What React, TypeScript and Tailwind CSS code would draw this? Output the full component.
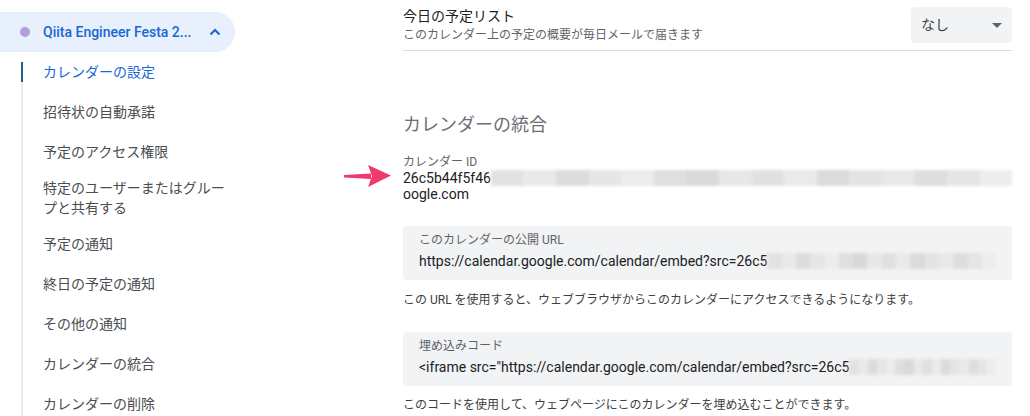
import React from "react";

const FONT = "font-['Roboto','Noto_Sans_CJK_JP',sans-serif]";

const MENU = [
  "カレンダーの設定",
  "招待状の自動承諾",
  "予定のアクセス権限",
  "特定のユーザーまたはグループと共有する",
  "予定の通知",
  "終日の予定の通知",
  "その他の通知",
  "カレンダーの統合",
  "カレンダーの削除",
];

// pixelated grey strip standing in for the blurred-out part of the id
const BLUR = [
  "#e2e2e2", "#e9e9e9", "#dcdcdc", "#e6e6e6", "#ececec", "#dfdfdf", "#d9d9d9", "#e8e8e8",
  "#e0e0e0", "#eaeaea", "#dbdbdb", "#e4e4e4", "#e9e9e9", "#dedede", "#e5e5e5", "#ededed",
];

const Blur = ({ className }: { className?: string }) => (
  <div className={`flex h-[16px] flex-1 overflow-hidden blur-[1.5px] ${className ?? ""}`}>
    {BLUR.map((c, i) => (
      <div key={i} className="h-full flex-1" style={{ backgroundColor: c }} />
    ))}
  </div>
);

const Sidebar = () => (
  <div className="w-[236px] shrink-0 pt-[12px]">
    <div className="flex h-[40px] w-[235px] items-center rounded-r-full bg-[#e8f0fe] pl-[20px] pr-[12px]">
      <span className="h-[10px] w-[10px] rounded-full bg-[#b39ddb]" />
      <span className="ml-[13px] flex-1 text-[14px] font-medium text-[#1967d2]">
        Qiita Engineer Festa 2...
      </span>
      <svg width="12" height="8" viewBox="0 0 12 8" className="mr-[2px]">
        <path d="M1.5 6.5 L6 2 L10.5 6.5" fill="none" stroke="#1967d2" strokeWidth="2" />
      </svg>
    </div>
    <div className="flex flex-col">
      {MENU.map((m, i) => (
        <div key={m} className="flex min-h-[40px]">
          <div className="ml-[21px] flex w-[2px] flex-col">
            {i === 0 ? (
              <>
                <div className="h-[10px]" />
                <div className="h-[20px] bg-[#1a5f96]" />
                <div className="flex-1 bg-[#e8eaed]" />
              </>
            ) : (
              <div className="flex-1 bg-[#e8eaed]" />
            )}
          </div>
          <div
            className={`ml-[20px] flex w-[186px] items-center py-[6px] text-[14px] leading-[20px] ${
              i === 0 ? "text-[#1967d2]" : "text-[#4a4d51]"
            }`}
          >
            {m}
          </div>
        </div>
      ))}
    </div>
  </div>
);

const Field = ({ label, value }: { label: string; value: string }) => (
  <div className="rounded-[4px] bg-[#f1f3f4] px-[16px] pt-[6px] pb-[9px]">
    <div className="text-[12px] leading-[16px] text-[#5f6368]">{label}</div>
    <div className="mt-[3px] flex items-center text-[14px] leading-[20px] text-[#202124]">
      <span className="whitespace-nowrap">{value}</span>
      <Blur />
    </div>
  </div>
);

export default function App() {
  return (
    <div className={`flex h-[416px] w-[1030px] overflow-hidden bg-white ${FONT}`}>
      <Sidebar />
      <div className="flex-1 pl-[167px] pr-[18px]">
        <div className="flex items-start justify-between border-b border-[#dadce0] pt-[6px] pb-[7px]">
          <div>
            <div className="text-[14px] leading-[20px] text-[#202124]">今日の予定リスト</div>
            <div className="mt-[1px] text-[12px] leading-[16px] text-[#5f6368]">
              このカレンダー上の予定の概要が毎日メールで届きます
            </div>
          </div>
          <div className="mt-[1px] flex h-[36px] w-[101px] items-center justify-between rounded-[4px] bg-[#f1f3f4] px-[10px] text-[14px] text-[#3c4043]">
            <span>なし</span>
            <svg width="10" height="5" viewBox="0 0 10 5">
              <path d="M0 0 L10 0 L5 5 Z" fill="#5f6368" />
            </svg>
          </div>
        </div>

        <div className="mt-[62px] text-[18px] leading-[24px] text-[#6b6f74]">カレンダーの統合</div>

        <div className="relative mt-[17px]">
          <svg
            width="50"
            height="26"
            viewBox="0 0 50 26"
            className="absolute top-[9px] left-[-60px]"
          >
            <path d="M1 12 L28 10.5 L28 16 L1 14.5 Z" fill="#ee3a6c" />
            <path d="M25 2 L48 12.5 L25 24 L29 13 Z" fill="#ee3a6c" />
          </svg>
          <div className="text-[12px] leading-[16px] text-[#5f6368]">カレンダー ID</div>
          <div className="flex items-center text-[14px] leading-[16px] text-[#202124]">
            <span>26c5b44f5f46</span>
            <Blur />
          </div>
          <div className="text-[14px] leading-[16px] text-[#202124]">oogle.com</div>
        </div>

        <div className="mt-[24px]">
          <Field
            label="このカレンダーの公開 URL"
            value="https://calendar.google.com/calendar/embed?src=26c5"
          />
        </div>
        <div className="mt-[12px] text-[12px] leading-[16px] text-[#3c4043]">
          この URL を使用すると、ウェブブラウザからこのカレンダーにアクセスできるようになります。
        </div>

        <div className="mt-[24px]">
          <Field
            label="埋め込みコード"
            value={'<iframe src="https://calendar.google.com/calendar/embed?src=26c5'}
          />
        </div>
        <div className="mt-[11px] text-[12px] leading-[16px] text-[#3c4043]">
          このコードを使用して、ウェブページにこのカレンダーを埋め込むことができます。
        </div>
      </div>
    </div>
  );
}
